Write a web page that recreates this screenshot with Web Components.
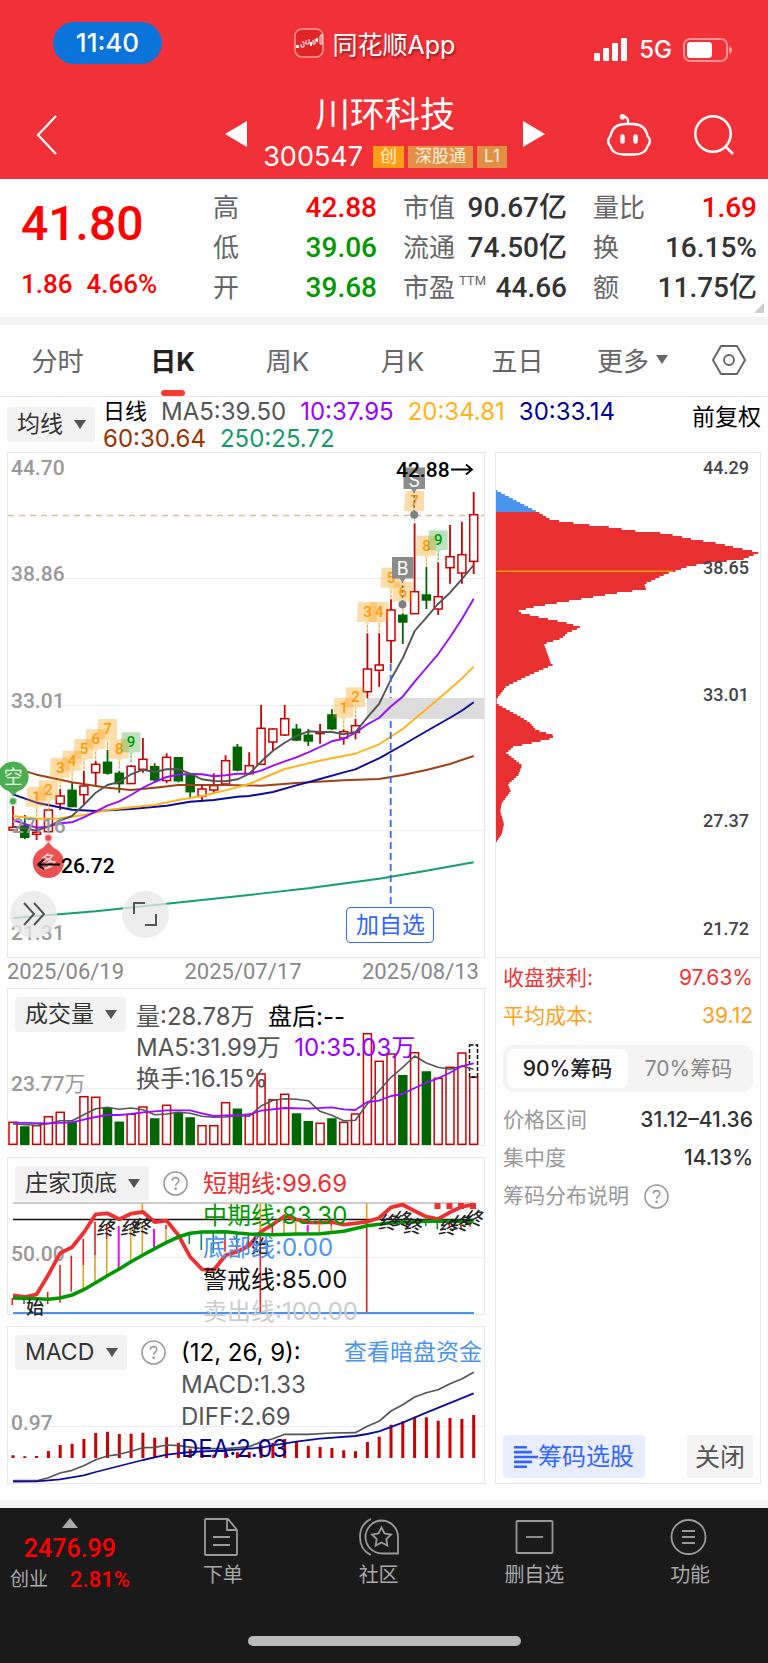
<!DOCTYPE html>
<html lang="zh-CN">
<head>
<meta charset="utf-8">
<meta name="viewport" content="width=device-width, initial-scale=1">
<title>川环科技 300547</title>
<style>
  body { margin: 0; background: #fff; color: #333; font-family: Inter, "Noto Sans CJK SC", sans-serif; --num: Roboto, "Noto Sans CJK SC", sans-serif; }
</style>
</head>
<body>
<stock-page></stock-page>
<script>
const BASE = `*{box-sizing:border-box} button,select{font:inherit;color:inherit;border:0;background:none;margin:0;padding:0;cursor:pointer} svg{display:block} a{text-decoration:none;color:inherit}`;
function define(name, css, html) {
  customElements.define(name, class extends HTMLElement {
    connectedCallback() {
      if (this.shadowRoot) return;
      const root = this.attachShadow({ mode: 'open' });
      root.innerHTML = `<style>${BASE}${css}</style>${typeof html === 'function' ? html(this) : html}`;
    }
  });
}

/* ---------- chart data ---------- */
const X = i => +((39 + i * 35.436) / 3).toFixed(1);
/* turns "x,y x,y" readings at triple scale into plot units */
const line = (pts, oy, color, w = 1.5, extra = '') =>
  `<polyline points="${pts.split(' ').map(p => { const [x, y] = p.split(',').map(Number); return (x / 3).toFixed(1) + ',' + (oy + y / 3).toFixed(1); }).join(' ')}" fill="none" stroke="${color}" stroke-width="${w}" stroke-linejoin="round" ${extra}/>`;
const RED = '#cc0000', GREEN = '#006600';

const candles = [
 [618,682,690,690,1],[645,678,712,718,0],[655,697,703,720,1],[630,630,695,695,1],[567,588,611,630,1],[548,571,620,620,0],[512,558,584,612,1],[482,493,518,558,1],[450,487,519,524,0],[512,520,551,578,0],
 [495,499,551,551,1],[414,478,508,518,1],[490,500,539,545,0],[460,472,542,550,1],[473,473,542,547,0],[525,525,575,592,0],[555,567,588,605,1],[520,557,570,580,1],[466,482,552,555,1],[432,442,510,514,0],
 [457,497,521,525,1],[315,385,493,493,1],[385,387,426,450,1],[315,356,405,408,1],[372,388,420,422,0],[387,406,423,438,0],[372,397,401,431,1],[328,345,386,390,0],[388,395,414,434,1],[356,377,397,418,1],
 [100,207,275,295,1],[100,195,211,260,1],[-2,30,122,190,1],[40,46,66,132,0],[-230,-25,41,41,1],[-100,-15,0,27,0],[-113,-10,27,45,1],[-225,-130,-97,-49,1],[-235,-136,-81,-49,1],[-324,-256,-116,-78,1]];

function candleSvg() {
  return candles.map(([h, t, b, l, up], i) => {
    const x = X(i), Y = v => +(600 + v / 3).toFixed(1), c = up ? RED : GREEN;
    return `<path d="M${x} ${Y(h)}V${Y(t)}M${x} ${Y(b)}V${Y(l)}" stroke="${c}" stroke-width="1.8"/>` +
      `<rect x="${(x - 4).toFixed(1)}" y="${Y(t)}" width="8" height="${Math.max(.8, (b - t) / 3).toFixed(1)}" fill="${up ? '#fff' : c}" stroke="${c}" stroke-width="1.5"/>`;
  }).join('');
}
function counters() {
  const list = [[2,'1',560],[3,'2',541],[4,'3',473],[5,'4',452],[6,'5',417],[7,'6',387],[8,'7',357],[9,'8',416],[10,'9',397],
    [28,'1',293],[29,'2',262],[30,'3',6],[31,'4',6],[32,'5',-97],[33,'6',-55],[34,'7',-327],[35,'8',-193],[36,'9',-209]];
  return list.map(([i, n, t]) => {
    const x = X(i), y = 600 + t / 3, g = n === '9', c = g ? '#009900' : '#ff9900', f = g ? '#33aa33' : '#ff9900';
    return `<path d="M${x - 9.5} ${y + 1}q0-1 1-1h17q1 0 1 1v18q0 1-1 1h-6l-2.500 4-2.500-4h-7q-1 0-1-1z" fill="${f}" fill-opacity=".33"/>` +
      `<path d="M${x} ${y + 23}V${y + 31}" stroke="${f}" stroke-width="1" stroke-dasharray="3 1"/>` +
      `<text x="${x}" y="${y + 15}" text-anchor="middle" font-size="15" fill="${c}" class="n m">${n}</text>`;
  }).join('');
}

const kPlot = `<svg viewBox="8 453 476 504" role="img" aria-label="日K线图">
 <path d="M8 578.500H484M8 705.500H484M8 830.500H484" stroke="#eee"/>
 <path d="M8 515.500H484" stroke="#dcc09a" stroke-width="1.300" stroke-dasharray="6 5"/>
 <rect x="367" y="698" width="117" height="21" fill="#dcdcdc"/>
 <g class="n m" font-size="21" fill="#999"><text x="11" y="475">44.70</text><text x="11" y="581">38.86</text><text x="11" y="708">33.01</text><text x="11" y="940">21.31</text></g>
 ${line('39,954 287,934 500,911 712,889 925,865 1137,836 1279,812 1421,787', 600, '#129f72', 1.9)}
 ${candleSvg()}
 ${line('39,502 110,524 216,547 322,563 393,570 464,563 535,555 677,555 783,557 889,549 1031,541 1137,537 1208,525 1279,510 1350,492 1421,468', 600, '#a04014', 1.9)}
 ${line('39,583 110,608 216,629 287,633 393,627 500,617 570,605 641,600 712,590 747,588 819,576 889,556 960,537 1031,517 1066,508 1137,475 1208,435 1279,394 1350,353 1385,332 1421,307', 600, '#0c0c9c', 1.9)}
 ${line('39,648 110,656 180,655 251,645 322,630 393,622 464,615 535,600 606,588 677,571 747,552 783,537 854,507 925,490 995,475 1066,461 1137,433 1208,387 1279,328 1350,267 1385,236 1421,200', 600, '#ffb31a', 1.9)}
 ${line('39,660 74,672 110,683 145,680 180,670 216,667 251,652 287,635 322,617 358,604 393,585 429,563 464,546 500,531 535,524 570,522 606,523 641,529 677,526 712,521 747,521 783,512 819,497 854,484 889,472 925,457 960,441 995,424 1031,416 1066,399 1102,373 1137,354 1173,319 1208,290 1244,245 1279,204 1314,163 1350,112 1385,58 1421,-4', 600, '#9a0cff', 1.9)}
 ${line('39,680 74,685 110,692 145,680 180,662 216,648 251,615 287,578 322,555 358,546 393,523 429,509 464,516 500,508 535,507 570,521 606,538 641,543 677,544 712,538 747,522 783,485 819,452 854,428 889,408 925,394 960,396 995,396 1031,403 1066,397 1102,352 1137,312 1173,238 1208,175 1244,93 1279,53 1314,12 1350,-22 1385,-62 1421,-105', 600, '#555', 1.9)}
 <text x="12" y="833" font-size="21" fill="#999" class="n m">27.16</text>
 <path d="M390.700 664V698M390.700 721V905" stroke="#3366ff" stroke-width="1.800" stroke-dasharray="7 4"/>
 ${counters()}
 <path d="M402.500 580V603M414.200 490V514" stroke="#777" stroke-width="1.500" stroke-dasharray="3 2"/>
 <g fill="#808080"><circle cx="402.500" cy="604.500" r="4"/><circle cx="414.200" cy="514.800" r="4"/></g>
 <g fill="#8b8b8b"><path d="M392 557h21.500v21.500h-8l-3 4-3-4H392z"/><path d="M403.500 467.500h21.500V489h-8l-3 4-3-4h-7.500z"/></g>
 <g fill="#fff" font-size="18" text-anchor="middle" font-family="Inter"><text x="402.700" y="574.500">B</text><text x="414.200" y="487">S</text></g>
 <text x="396" y="477" font-size="21" fill="#000" class="n m">42.88</text>
 <path d="M451 469.500h21m-6-5l6 5-6 5" stroke="#000" stroke-width="1.800" fill="none"/>
 <circle cx="13.300" cy="776.700" r="15.300" fill="#4bae50"/><path d="M8 790h11l-6 6z" fill="#4bae50"/>
 <circle cx="13" cy="801.300" r="4" fill="#a9d9ab"/><circle cx="13" cy="801.300" r="2.800" fill="#3fae48"/>
 <text x="13.300" y="784" font-size="19" fill="#e6f5e6" text-anchor="middle">空</text>
 <circle cx="48.300" cy="862.500" r="15.500" fill="#ec5252"/><path d="M42 849l6.300-7 6.300 7z" fill="#ec5252"/>
 <circle cx="48.300" cy="838" r="4" fill="#f5b5b5"/><circle cx="48.300" cy="838" r="2.800" fill="#ec4a4f"/>
 <text x="48.300" y="868" font-size="17" fill="#ffe3e3" text-anchor="middle">多</text>
 <path d="M60 864.500H38m6-5l-6 5 6 5" stroke="#000" stroke-width="1.800" fill="none"/>
 <text x="61" y="873" font-size="21" fill="#000" class="n m">26.72</text>
</svg>`;

const vols = '427r 441g 437r 410r 397r 427g 350r 352r 386g 427g 403r 381r 417g 376r 398g 414g 437r 437r 368r 388g 403r 282r 359r 343r 402g 425g 430r 417g 427r 402r 161r 244r 222r 287g 218r 276g 295r 262r 219r 292r'.split(' ');
const volPlot = `<svg viewBox="8 989 476 156" role="img" aria-label="成交量柱状图">
 <path d="M8 1088.500H484" stroke="#eee"/>
 <text x="11" y="1091" font-size="21" fill="#999" class="n m">23.77<tspan font-weight="400">万</tspan></text>
 ${vols.map((v, i) => { const t = 980 + parseInt(v) / 3, up = v.endsWith('r'); return `<rect x="${(X(i) - 4).toFixed(1)}" y="${t.toFixed(1)}" width="8" height="${(1144.300 - t).toFixed(1)}" fill="${up ? 'none' : GREEN}" stroke="${up ? RED : GREEN}" stroke-width="1.500"/>`; }).join('')}
 <rect x="469.500" y="1045" width="8" height="32" fill="none" stroke="#000" stroke-width="1.500" stroke-dasharray="4 2"/>
 ${line('39,432 110,436 145,431 180,422 216,422 251,404 287,386 322,382 358,388 393,384 429,389 464,404 500,402 535,397 570,400 606,409 641,412 677,411 712,407 747,409 783,378 819,361 854,356 889,358 925,362 960,394 995,406 1031,422 1066,421 1102,372 1137,332 1173,292 1208,262 1244,228 1279,249 1314,262 1350,268 1385,258 1421,268', 980, '#555', 1.6)}
 ${line('39,428 145,430 216,427 251,419 287,411 322,405 358,405 393,402 429,397 464,394 500,391 570,391 606,400 641,408 747,404 783,392 854,384 925,386 995,382 1031,388 1066,390 1102,366 1137,362 1173,348 1208,342 1244,324 1279,308 1314,295 1350,278 1385,259 1421,250', 980, '#9a0cff', 1.8)}
</svg>`;

const R = '#ee1c1c', G = '#dfa21c', M = '#ff00ff', T = '#128060', O = '#ff9900';
const ticks = [[37,324,345,R],[72,325,342,T],[143,305,342,R],[180,225,338,R],[214,197,305,R],[250,147,225,R],[250,225,298,G],[285,95,195,R],[285,195,275,G],[320,105,147,R],[320,147,255,G],[356,108,237,M],[392,110,215,G],[427,40,70,O],[427,100,195,G],[462,117,176,M],[498,105,118,R],[498,118,157,G],[568,130,162,T],[604,130,180,T],[640,126,190,T],[675,126,150,T],[675,150,185,R],[710,130,160,T],[710,160,180,R],[745,135,172,R],[781,40,120,O],[781,120,368,R],[817,105,130,R],[852,85,100,R],[852,100,130,G],[887,95,130,G],[923,105,130,M],[958,105,130,G],[994,98,108,R],[994,108,124,G],[1100,40,88,O],[1100,88,368,R],[1277,94,108,T],[1312,94,118,T],[1348,96,112,R],[1383,96,115,R],[1410,96,110,R]];
const zhongPlot = `<svg viewBox="8 1158 476 156" role="img" aria-label="庄家顶底指标图">
 <path d="M8 1257.500H484" stroke="#eee"/>
 <text x="11" y="1261" font-size="21" fill="#999" class="n m">50.00</text>
 <path d="M13 1203H474" stroke="#ccc" stroke-width="2"/><path d="M13 1219.500H474" stroke="#111" stroke-width="1.600"/>
 ${ticks.map(([x, a, b, c]) => `<path d="M${(x / 3).toFixed(1)} ${(1190 + a / 3).toFixed(1)}V${(1190 + b / 3).toFixed(1)}" stroke="${c}" stroke-width="${c === M ? 2 : 1.6}"/>`).join('')}
 ${line('39,316 74,321 110,313 145,255 180,190 216,172 251,128 287,73 322,70 358,88 393,71 429,66 464,96 500,92 535,135 570,200 606,238 641,240 677,196 712,185 747,167 783,125 819,103 854,78 889,88 925,97 960,98 995,96 1031,104 1066,100 1102,95 1137,84 1173,52 1208,44 1244,63 1279,80 1314,87 1350,67 1385,50 1421,44', 1190, '#ee3030', 3.8)}
 ${line('39,324 110,326 145,328 180,324 216,315 251,299 287,278 322,257 358,237 393,215 429,195 464,176 500,157 535,141 570,130 606,126 677,125 712,129 747,132 819,134 889,132 960,131 1031,124 1102,107 1173,98 1279,94 1421,94', 1190, '#009900', 3.6)}
 <path d="M13 1313H474" stroke="#4a94f0" stroke-width="2"/>
 <path d="M434.500 1203h6v6h-6zM446.500 1203h6v6h-6zM458 1203h6v6h-6zM470 1203h6v6h-6z" fill="#ee3030"/>
 <g font-size="18" fill="#222" text-anchor="middle" font-weight="500">
  <text x="35" y="1314">始</text><text x="260" y="1253">始</text>
  ${[[316,113],[387,113],[423,108],[1160,96],[1202,88],[1235,107],[1340,110],[1377,98],[1418,84]].map(([x, y]) => `<text x="${(x / 3).toFixed(0)}" y="${(1197 + y / 3).toFixed(0)}" font-style="italic">终</text>`).join('')}
 </g>
</svg>`;

const hist = '706 709 708 693 675 671 657 639 635 642 641 638 653 652 668 686 697 704 697 697 696 676 668 657 665 677 681 684 691 694 666 650 614 604 590 592 602 594 597 585'.split(' ');
const macdPlot = `<svg viewBox="8 1327 476 156" role="img" aria-label="MACD指标图">
 <path d="M8 1426.500H484" stroke="#eee"/>
 <text x="11" y="1430" font-size="21" fill="#999" class="n m">0.97</text>
 <path d="${hist.map((v, i) => `M${X(i)} 1458V${(1220 + v / 3).toFixed(1)}`).join('')}" stroke="${RED}" stroke-width="3"/>
 ${line('39,782 110,782 145,773 180,759 216,751 251,737 287,719 322,708 358,703 393,694 429,683 464,682 500,675 535,677 606,686 677,686 747,680 783,666 819,656 854,643 925,643 995,639 1066,638 1102,619 1137,604 1173,573 1208,554 1244,531 1279,518 1314,509 1350,491 1385,477 1421,457', 1220, '#555', 1.7)}
 ${line('39,785 110,784 180,778 216,772 251,766 287,756 358,738 429,720 500,704 570,696 677,691 783,683 819,676 889,665 960,656 1066,648 1102,642 1137,634 1208,608 1279,578 1421,520', 1220, '#0c0c9c', 1.8)}
</svg>`;

/* distribution of holding costs: one 2-unit bar per price level */
function chipPlot() {
  const p = [[50,147],[175,210],[213,232],[310,245],[400,254],[450,263],[540,270],[585,277],[635,288],[713,300],[765,312],[815,322],[838,327],[806,340],[790,346],[680,358],[625,367],[582,382],[560,388],[508,412],[493,418],[498,434],[425,442],[315,460],[220,475],[155,486],[108,499],[185,516],[255,530],[303,544],[262,560],[245,576],[192,592],[213,650],[221,652],[143,685],[78,716],[50,752],[50,766],[123,805],[150,822],[168,842],[219,857],[219,866],[155,880],[100,891],[79,909],[126,945],[115,973],[84,1000],[92,1020],[65,1055],[61,1078],[72,1115],[65,1145],[50,1166]]
    .map(([x, y]) => [480 + x / 3, 440 + y / 2.904]);
  const at = y => { for (let i = 1; i < p.length; i++) if (y <= p[i][1]) { const [a, b] = [p[i - 1], p[i]]; return a[0] + (b[0] - a[0]) * (y - a[1]) / (b[1] - a[1]); } return 496; };
  const area = (y0, y1) => { let d = `M496 ${y0}`; for (let y = y0; y < y1; y += 2) d += `H${at(y + 1).toFixed(1)}v2`; return d + 'H496z'; };
  return `<svg viewBox="496 453 264 504" role="img" aria-label="筹码分布图">
   <path d="${area(490, 512)}" fill="#4a94ee"/><path d="${area(512, 842)}" fill="#e83030"/>
   <path d="M496.500 571.300H673" stroke="#ff9900" stroke-width="1.600"/>
   <g class="n m" font-size="18" fill="#444" text-anchor="end"><text x="749" y="474">44.29</text><text x="749" y="574">38.65</text><text x="749" y="701">33.01</text><text x="749" y="827">27.37</text><text x="749" y="935">21.72</text></g>
  </svg>`;
}

/* ---------- small parts ---------- */
define('help-mark', `:host{display:inline-flex} button{width:25px;height:25px;color:#999}`,
 `<button type="button" aria-label="说明"><svg width="25" height="25" viewBox="0 0 25 25" fill="none" stroke="currentColor" stroke-width="1.600"><circle cx="12.500" cy="12.500" r="11.500"/><path d="M9.300 9.800c0-4.300 6.500-4.100 6.500-.3 0 2.600-3.200 2.500-3.200 5.200" /><circle cx="12.600" cy="17.800" r=".6" fill="currentColor"/></svg></button>`);

define('indicator-select', `:host{display:inline-grid;color:#333} select,svg{grid-area:1/1} select{appearance:none;height:35px;padding:0 32px 0 10px;background:#f2f2f2;border-radius:4px;font-size:23px;line-height:35px} svg{justify-self:end;align-self:center;margin-right:9px;pointer-events:none}`,
 el => `<select aria-label="选择指标"><option>${el.getAttribute('value')}</option></select><svg width="12" height="9" viewBox="0 0 12 9"><path d="M0 0h12L6 9z" fill="#555"/></svg>`);

/* a framed plot with its legend laid over it */
define('chart-panel', `:host{display:grid;border:1px solid #e8e8e8;position:relative} .plot{grid-area:1/1} .over{grid-area:1/1;z-index:1;padding:8px 2px 0 7px;display:flex;align-items:flex-start;min-width:0;height:0} svg{width:100%;height:auto;overflow:visible} .n{font-family:var(--num)} .m{font-weight:500}`,
 el => `<div class="plot">${{ k: kPlot, vol: volPlot, zhong: zhongPlot, macd: macdPlot }[el.getAttribute('plot')]}</div><div class="over"><slot></slot></div>`);

define('legend-lines', `:host{display:block;font-size:24px;line-height:32px;padding-top:2px;color:#555;white-space:nowrap} :host([tight]){line-height:31px;padding-top:4px}`, `<slot></slot>`);

/* ---------- page sections ---------- */
define('status-bar', `:host{display:grid;grid-template-columns:1fr auto 1fr;align-items:center;height:85px;padding:0 36px 0 53px;color:#fff}
 .time{width:109px;height:42px;border-radius:21px;background:#0a74da;font-size:26px;line-height:42px;text-align:center;font-weight:500}
 .app{display:flex;align-items:center;gap:9px;font-size:25px;text-shadow:1px 2px 2px #0006;margin-right:36px}
 .sys{display:flex;justify-content:flex-end;align-items:center;gap:11px;font-size:24px;font-weight:500;padding-top:14px}`,
 `<div class="time">11:40</div>
 <div class="app"><svg width="30" height="30" viewBox="0 0 30 30" fill="none"><rect x="1" y="1" width="28" height="28" rx="7" stroke="#ff9a96" stroke-width="1.500" fill="#e02428"/><path d="M2 17h3v3H2zM16 14h2v4h-2zM22 10h2v4h-2z" fill="#fff"/><path d="M7 16v3h3v-5H8M12 12v4h3v-5M19 12v4h2v-5M26 8v8h2V6z" stroke="#fff"/></svg>同花顺App</div>
 <div class="sys"><svg width="34" height="23" viewBox="0 0 34 23" fill="#fff"><rect y="15" width="6" height="8" rx="1"/><rect x="9" y="10" width="6" height="13" rx="1"/><rect x="18" y="5" width="6" height="18" rx="1"/><rect x="27" width="6" height="23" rx="1"/></svg>5G<svg width="49" height="24" viewBox="0 0 49 24"><rect x="1" y="1" width="43" height="22" rx="6" fill="none" stroke="#ff9294" stroke-width="2"/><rect x="4" y="4" width="25" height="16" rx="3.500" fill="#fff"/><path d="M46 8v8q3-1 3-4t-3-4z" fill="#ff9294"/></svg></div>`);

define('stock-nav', `:host{display:grid;grid-template-columns:1fr auto 1fr;align-items:center;height:94px;padding:0 34px 0 36px;color:#fff}
 .mid{display:grid;grid-template-columns:22px 276px 22px;align-items:center}
 .name{text-align:center} h1{margin:0;font-weight:400;font-size:35px;line-height:42px}
 p{margin:8px 0 0;display:flex;justify-content:center;align-items:center;gap:4px;font-size:27px;line-height:28px} p b{font-weight:400;margin-right:6px}
 p span{font-size:17px;line-height:21px;height:22px;padding:0 7px;background:#e39045;color:#fff3e0} p span.cy{background:#ff9d14}
 .r{display:flex;justify-content:flex-end;gap:42px;margin-top:6px} .l{margin-top:6px;justify-self:start} .mid button{margin-top:4px}`,
 `<button class="l" type="button" aria-label="返回"><svg width="22" height="40" viewBox="0 0 22 40"><path d="M20 1L2 20l18 19" fill="none" stroke="#fff" stroke-width="2.200"/></svg></button>
 <div class="mid"><button type="button" aria-label="上一只"><svg width="22" height="26" viewBox="0 0 22 26"><path d="M22 0v26L0 13z" fill="#fff"/></svg></button>
 <div class="name"><h1>川环科技</h1><p><b>300547</b><span class="cy">创</span><span>深股通</span><span>L1</span></p></div>
 <button type="button" aria-label="下一只"><svg width="22" height="26" viewBox="0 0 22 26"><path d="M0 0v26l22-13z" fill="#fff"/></svg></button></div>
 <div class="r"><button type="button" aria-label="智能助手"><svg width="46" height="42" viewBox="0 0 46 42" fill="none" stroke="#fff" stroke-width="2.400"><path d="M20 10h6c8 0 14 4 15.500 12 3 3 3 7 0 10.500C40 38 35 40.500 28 40.500H18c-7 0-12-2.500-13.500-8-3-3.500-3-7.500 0-10.500C6 14 12 10 20 10z"/><path d="M22 9q1-5.500-4.500-6.500"/><circle cx="16.500" cy="2.800" r="1.600" fill="#fff"/><path d="M16.500 22.500v5M29.500 22.500v5" stroke-width="4.500" stroke-linecap="round"/></svg></button>
 <button type="button" aria-label="搜索"><svg width="40" height="40" viewBox="0 0 40 40" fill="none" stroke="#fff" stroke-width="2.500"><circle cx="19" cy="19" r="17.700"/><path d="M31 31l8 8"/></svg></button></div>`);

define('quote-cell', `:host{display:flex;justify-content:space-between;align-items:center;line-height:40px;font-size:26px;color:#666;white-space:nowrap}
 b{font:500 28px/40px var(--num);color:#333} :host([up]) b{color:#ff0000} :host([down]) b{color:#009900} sup{font-size:13px;line-height:1;position:relative;vertical-align:top;top:6px;margin-left:4px}`,
 el => `<span><slot></slot>${el.hasAttribute('sup') ? `<sup>${el.getAttribute('sup')}</sup>` : ''}</span><b>${el.getAttribute('value')}</b>`);

define('quote-board', `:host{display:grid;grid-template-columns:166px repeat(3,1fr);column-gap:26px;padding:9px 11px 9px 21px;position:relative;border-bottom:8px solid #f4f4f4;color:#ff0000;font-family:var(--num)}
 .price{display:flex;flex-direction:column;font-weight:500} .price strong{font-size:48px;line-height:72px;font-weight:500} .price div{display:flex;gap:14px;font-size:26px;line-height:44px;padding-top:2px}
 .more{position:absolute;right:4px;bottom:4px}`,
 `<div class="price"><strong>41.80</strong><div><span>1.86</span><span>4.66%</span></div></div>
 <div><quote-cell up value="42.88">高</quote-cell><quote-cell down value="39.06">低</quote-cell><quote-cell down value="39.68">开</quote-cell></div>
 <div><quote-cell value="90.67亿">市值</quote-cell><quote-cell value="74.50亿">流通</quote-cell><quote-cell value="44.66" sup="TTM">市盈</quote-cell></div>
 <div><quote-cell up value="1.69">量比</quote-cell><quote-cell value="16.15%">换</quote-cell><quote-cell value="11.75亿">额</quote-cell></div>
 <svg class="more" width="10" height="10" viewBox="0 0 10 10"><path d="M10 0v10H0z" fill="#ccc"/></svg>`);

define('period-tabs', `:host{display:block;border-bottom:1px solid #e8e8e8} nav{display:grid;grid-template-columns:repeat(6,1fr) 78px;height:71px}
 button{display:flex;align-items:center;justify-content:center;font-size:26px;color:#666;padding-bottom:2px;position:relative} button.on{color:#222;font-weight:700} button.on::after{content:"";position:absolute;bottom:0;left:50%;width:24px;height:6px;border-radius:3px;margin-left:-12px;background:#ff3b30} .tri{margin-left:7px}`,
 `<nav><button type="button">分时</button><button type="button" class="on">日K</button><button type="button">周K</button><button type="button">月K</button><button type="button">五日</button><button type="button">更多<svg class="tri" width="12" height="9" viewBox="0 0 12 9"><path d="M0 0h12L6 9z" fill="#666"/></svg></button><button type="button" aria-label="设置"><svg width="34" height="30" viewBox="0 0 34 30" fill="none" stroke="#666" stroke-width="1.900"><path d="M9 1h16l8 14-8 14H9L1 15z"/><circle cx="17" cy="15" r="5"/></svg></button></nav>`);

define('ma-bar', `:host{display:flex;align-items:center;height:55px;padding:0 7px;gap:8px;font-size:24px;line-height:27px}
 .list{flex:1;display:flex;flex-wrap:wrap;column-gap:14px;white-space:nowrap} .cn{font-size:22px;color:#000} .adj{font-size:23px;color:#000;margin-bottom:15px;white-space:nowrap}`,
 `<indicator-select value="均线"></indicator-select><div class="list"><span class="cn">日线</span><span style="color:#555">MA5:39.50</span><span style="color:#9900ff">10:37.95</span><span style="color:#ffb319">20:34.81</span><span style="color:#000099">30:33.14</span><span style="color:#993300">60:30.64</span><span style="color:#129a6b">250:25.72</span></div><button class="adj" type="button">前复权</button>`);

define('k-panel', `:host{display:block;position:relative} .add{position:absolute;left:71%;bottom:3%;width:88px;height:36px;border:1px solid #3366ff;border-radius:4px;background:#fff;color:#3366ff;font-size:23px;line-height:32px}
 .round{position:absolute;bottom:4%;width:47px;height:47px;border-radius:50%;background:#e8e8e8c8;display:grid;place-items:center} .a{left:3px} .b{left:24%}`,
 `<chart-panel plot="k"></chart-panel><button class="round a" type="button" aria-label="展开"><svg width="22" height="24" viewBox="0 0 22 24" fill="none" stroke="#555" stroke-width="2"><path d="M1 1l10 11L1 23M11 1l10 11-10 11"/></svg></button><button class="round b" type="button" aria-label="全屏"><svg width="24" height="24" viewBox="0 0 24 24" fill="none" stroke="#555" stroke-width="2"><path d="M1 12V1h11M12 23h11V12"/></svg></button><button class="add" type="button">加自选</button>`);

define('chip-row', `:host{display:flex;justify-content:space-between;align-items:center;font-size:21px;line-height:38px;color:#999;white-space:nowrap} ::slotted(b){font-weight:500;color:#333} :host([plain]) ::slotted(b){font-weight:400;color:inherit}`, `<slot></slot>`);

define('chip-panel', `:host{display:flex;flex-direction:column;border:1px solid #e8e8e8} .plot svg{width:100%;height:auto} .n{font-family:var(--num)} .m{font-weight:500}
 .info{border-top:1px solid #e8e8e8;padding:1px 7px 5px;flex:1;display:flex;flex-direction:column}
 .seg{display:grid;grid-template-columns:1fr 1fr;background:#f4f4f4;border-radius:10px;padding:4px;height:47px;margin:10px 0 9px;font-size:21px;color:#888} .seg button{padding-bottom:3px} .seg .on{background:#fff;border-radius:8px;color:#222;font-weight:500}
 .acts{margin-top:auto;display:flex;justify-content:space-between} .acts button{height:43px;border-radius:4px;padding:0 8px;font-size:25px;background:#f4f4f4;color:#555;line-height:40px} .acts .pick{background:#e8edff;color:#3366ff;display:flex;align-items:center;font-size:24px;padding:0 11px}
 help-mark{margin-left:15px} .q{display:flex;align-items:center}`,
 () => `<div class="plot">${chipPlot()}</div><div class="info">
 <chip-row plain style="color:#ee3535"><span>收盘获利:</span><b>97.63%</b></chip-row><chip-row plain style="color:#ffa020"><span>平均成本:</span><b>39.12</b></chip-row>
 <div class="seg"><button type="button" class="on">90%筹码</button><button type="button">70%筹码</button></div>
 <chip-row><span>价格区间</span><b>31.12–41.36</b></chip-row><chip-row><span>集中度</span><b>14.13%</b></chip-row>
 <chip-row><span class="q">筹码分布说明<help-mark></help-mark></span></chip-row>
 <div class="acts"><button type="button" class="pick"><svg width="24" height="22" viewBox="0 0 24 22" stroke="#3366ff" stroke-width="2.600"><path d="M0 1.300h13M0 6.100h18M0 11h24M0 15.900h18M0 20.700h13"/></svg>筹码选股</button><button type="button">关闭</button></div></div>`);

define('bar-item', `:host{display:block} a{display:flex;flex-direction:column;align-items:center;font-size:20px;line-height:28px;color:#a8a8a8} svg{fill:none;stroke:#999;stroke-width:1.800;margin-bottom:5px}`,
 el => `<a href="#"><svg width="40" height="38" viewBox="0 0 40 38">${{
  order: '<path d="M3 1h22l9 11v24q0 1-1 1H3q-1 0-1-1V2q0-1 1-1zM24 1v11h9M10 19h17M10 27h17"/>',
  club: '<path d="M23 2.500A16.500 16.500 0 1 0 23 35.500H39V19A16.500 16.500 0 0 0 23 2.500zM12 1Q1 6 1 19t11 18"/><path d="M22.500 9.500l3 6 6.500 1-4.700 4.600 1.100 6.500-5.900-3.100-5.900 3.100 1.100-6.500L13 16.500l6.500-1z"/>',
  del: '<rect x="2.500" y="3" width="36" height="32" rx="1"/><path d="M12 19h17"/>',
  fn: '<circle cx="18.500" cy="19" r="17"/><path d="M12 13h13M12 19h13M12 25h13"/>' }[el.getAttribute('icon')]}</svg><slot></slot></a>`);

define('bottom-bar', `:host{display:block;background:#1a1a1a;border-top:8px solid #f4f4f4;padding-bottom:17px} .items{display:grid;grid-template-columns:145px repeat(4,1fr);padding-top:10px;height:128px}
 .idx{display:grid;grid-template-columns:auto auto;justify-content:start;column-gap:22px;align-content:start;padding-left:10px;color:#ff0000;font-family:var(--num);font-weight:500;font-size:22px;line-height:28px} .idx svg{grid-column:1/3;justify-self:center;margin-bottom:4px} .idx strong{grid-column:1/3;justify-self:center;font-weight:500;font-size:25px;line-height:34px} .idx b{font-weight:500} .idx span{color:#a8a8a8;font-size:19px;font-weight:400}
 .home{width:273px;height:10px;border-radius:5px;background:#bababa;margin:0 auto}`,
 `<div class="items"><div class="idx"><svg width="16" height="10" viewBox="0 0 16 10"><path d="M8 0l8 10H0z" fill="#aaa"/></svg><strong>2476.99</strong><span>创业</span><b>2.81%</b></div>
 <bar-item icon="order">下单</bar-item><bar-item icon="club">社区</bar-item><bar-item icon="del">删自选</bar-item><bar-item icon="fn">功能</bar-item></div><div class="home"></div>`);

define('stock-page', `:host{display:block} header{background:#f23037;overflow:hidden} main{display:grid;grid-template-columns:478fr 266fr;column-gap:10px;padding:0 7px 16px} .left{min-width:0}
 .dates{display:flex;justify-content:space-between;font:400 22px/27px var(--num);color:#888;padding:0 6px 3px 0} .left>chart-panel+chart-panel{margin-top:11px}
 legend-lines{margin-left:10px} help-mark{margin:5px 5px 0 14px} .go{margin-left:auto;font-size:23px;line-height:35px;color:#4a94ee;white-space:nowrap}`,
 `<header><status-bar></status-bar><stock-nav></stock-nav></header>
 <quote-board></quote-board><period-tabs></period-tabs><ma-bar></ma-bar>
 <main><div class="left"><k-panel></k-panel>
 <div class="dates"><time>2025/06/19</time><time>2025/07/17</time><time>2025/08/13</time></div>
 <chart-panel plot="vol"><indicator-select value="成交量"></indicator-select><legend-lines tight>量:28.78万 &nbsp;<span style="color:#000">盘后:--</span><br>MA5:31.99万 &nbsp;<span style="color:#9900ff">10:35.03万</span><br>换手:16.15%</legend-lines></chart-panel>
 <chart-panel plot="zhong"><indicator-select value="庄家顶底"></indicator-select><help-mark></help-mark><legend-lines><span style="color:#ee3030">短期线:99.69</span><br><span style="color:#009900">中期线:83.30</span><br><span style="color:#4a94ee">底部线:0.00</span><br><span style="color:#111">警戒线:85.00</span><br><span style="color:#ccc">卖出线:100.00</span></legend-lines></chart-panel>
 <chart-panel plot="macd"><indicator-select value="MACD"></indicator-select><help-mark></help-mark><legend-lines><span style="color:#000">(12, 26, 9):</span><br>MACD:1.33<br>DIFF:2.69<br><span style="color:#000099">DEA:2.03</span></legend-lines><a class="go" href="#">查看暗盘资金</a></chart-panel>
 </div><chip-panel></chip-panel></main><bottom-bar></bottom-bar>`);
</script>
</body>
</html>
